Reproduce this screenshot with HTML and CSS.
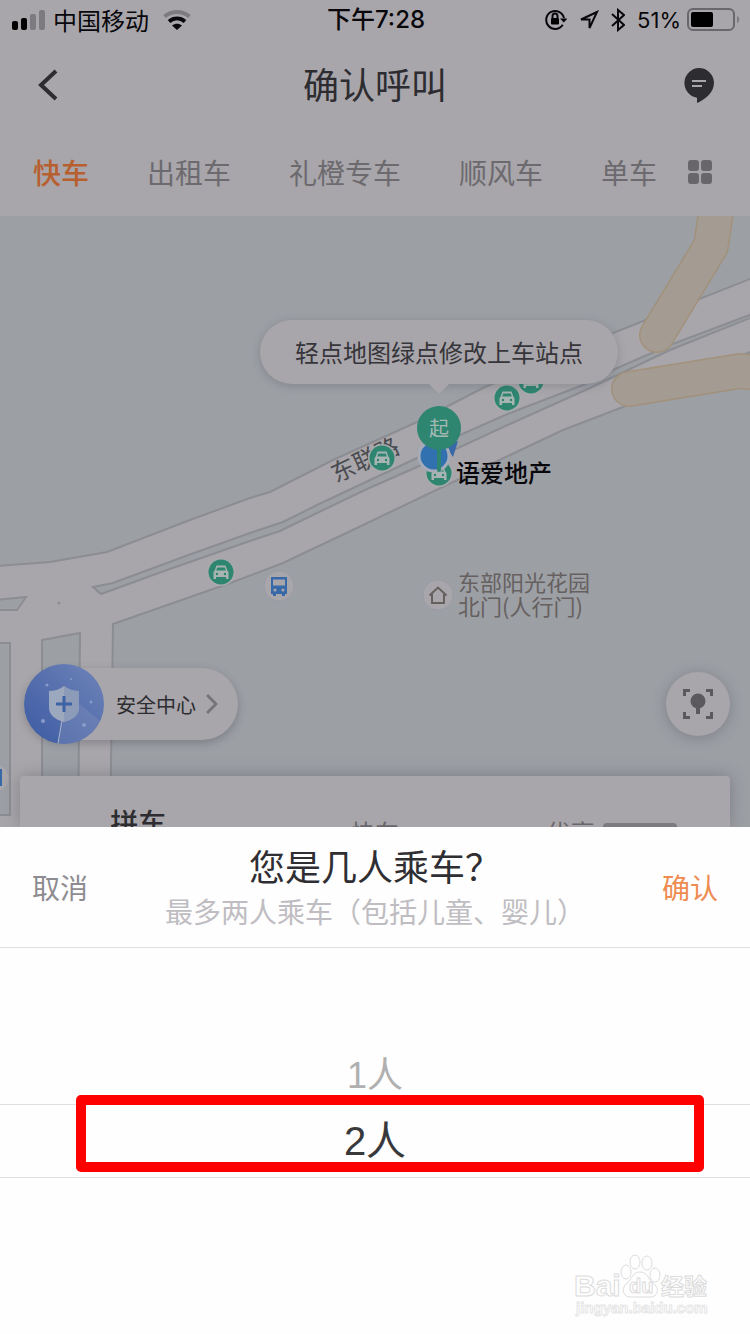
FILE: index.html
```html
<!DOCTYPE html>
<html lang="zh-CN">
<head>
<meta charset="utf-8">
<meta name="viewport" content="width=device-width, initial-scale=1">
<title>确认呼叫</title>
<link rel="stylesheet" href="styles.css">
</head>
<body>
<div class="status">
  <div class="status-side">
    <svg class="signal" width="33" height="20" viewBox="0 0 33 20" aria-hidden="true">
      <rect x="0" y="11" width="6" height="9" rx="2"/><rect x="9" y="8" width="6" height="12" rx="2"/>
      <rect class="dim" x="18" y="4" width="6" height="16" rx="2"/><rect class="dim" x="27" y="0" width="6" height="20" rx="2"/>
    </svg>
    <span>中国移动</span>
    <svg class="wifi" width="28" height="20" viewBox="0 0 28 20" aria-hidden="true">
      <path class="dim-line" d="M1.500 6.500C9 .500 19 .500 26.500 6.500"/>
      <path d="M6 11.500C11 7.500 17 7.500 22 11.500"/>
      <path class="solid" d="M14 20L9 15.500C12 13.300 16 13.300 19 15.500Z"/>
    </svg>
  </div>
  <div class="status-time">下午7:28</div>
  <div class="status-side status-right">
    <svg width="22" height="22" viewBox="0 0 22 22" aria-hidden="true">
      <path class="line" d="M17.800 15.800A9 9 0 1 1 19 9"/><path d="M15 9.500H22.500L18.800 13.500Z"/>
      <rect x="6" y="9" width="8" height="6.500" rx="1"/><path class="line" d="M7.500 9V7A2.500 2.500 0 0 1 12.500 7V9"/>
    </svg>
    <svg width="20" height="20" viewBox="0 0 20 20" aria-hidden="true"><path class="line thin" d="M18 2L2 9.500H10.500V18Z"/></svg>
    <svg width="14" height="24" viewBox="0 0 14 24" aria-hidden="true"><path class="line" d="M1 6L13 17L7 22V2L13 7L1 18"/></svg>
    <span class="percent">51%</span>
    <svg class="battery" width="53" height="24" viewBox="0 0 53 24" aria-hidden="true">
      <rect class="shell" x="1" y="1" width="46" height="21" rx="5"/><rect x="4" y="4" width="22" height="15" rx="2"/>
      <path class="dim" d="M50 8C53 9 53 14 50 15Z"/>
    </svg>
  </div>
</div>
<header class="nav">
  <button class="icon-btn" aria-label="返回"><svg width="24" height="32" viewBox="0 0 24 32"><path class="back" d="M20 2L5 16L20 30"/></svg></button>
  <h1>确认呼叫</h1>
  <button class="icon-btn" aria-label="消息"><svg width="30" height="36" viewBox="0 0 30 36">
    <path class="dark" d="M15 1A15 15 0 0 0 13 30.800V36C20 33 30 26 30 16A15 15 0 0 0 15 1Z"/><path class="chat-lines" d="M8 14H22M8 19H18"/></svg></button>
</header>
<nav class="tabs">
  <a class="active" href="#">快车</a><a href="#">出租车</a><a href="#">礼橙专车</a><a href="#">顺风车</a><a href="#">单车</a>
  <button class="grid-btn" aria-label="全部"><svg width="24" height="24" viewBox="0 0 24 24"><rect width="11" height="11" rx="3"/><rect x="13" width="11" height="11" rx="3"/><rect y="13" width="11" height="11" rx="3"/><rect x="13" y="13" width="11" height="11" rx="3"/></svg></button>
</nav>
<main class="map">
  <svg class="map-canvas" viewBox="0 216 750 611" preserveAspectRatio="xMidYMid slice">
    <defs>
      <g id="car">
        <circle class="pin-ring" r="14"/><circle class="green" r="12.500"/>
        <path class="pale" d="M-4.500 -6.500H4.500L6.500 -1L7.500 0V7H5V5H-5V7H-7.500V0L-6.500 -1Z"/>
        <path class="green" d="M-3.800 -4.500H3.800L4.800 -1.500H-4.800Z"/><circle class="green" cx="-4" cy="2" r="1.200"/><circle class="green" cx="4" cy="2" r="1.200"/>
      </g>
      <g id="bus">
        <circle class="poi" r="15"/>
        <path class="blue" d="M-8 -9H8V8H6V10H3V8H-3V10H-6V8H-8Z"/><rect class="poi-fill" x="-6" y="-6.500" width="12" height="6"/>
        <circle class="poi-fill" cx="-4" cy="4" r="1.600"/><circle class="poi-fill" cx="4" cy="4" r="1.600"/>
      </g>
    </defs>
    <path class="road" d="M-5 566L50 562L107 552L190 520L250 498L270 492L333 460L417 422L483 388L613 333L755 277V350L623 407L563 430L510 455L453 482L340 536L283 563L233 582L113 624L110 835H-5Z"/>
    <path class="land" d="M93 587L113 583L183 557L250 533L283 522L317 505L417 458L460 435L510 413L583 385L615 369L670 345L755 313V316L670 350L590 388L510 424L417 467L367 489L317 513L280 531L250 541L167 570L101 594Z"/>
    <path class="land" d="M-5 600L26 597L17 610H-5ZM42 640L80 633L78 835H42ZM-5 643H10V815H-5Z"/>
    <circle class="dot" cx="59" cy="603" r="1.500"/>
    <path class="walk-edge" d="M717 205L711 246L657 335M629 389L740 371L765 374"/>
    <path class="walk" d="M717 205L711 246L657 335M629 389L740 371L765 374"/>
    <text class="road-name" transform="translate(336 483) rotate(-25)">东联路</text>
    <use href="#car" x="382" y="458"/><use href="#car" x="531" y="381"/><use href="#car" x="507" y="398"/><use href="#car" x="221" y="572"/><use href="#car" x="439" y="473"/>
    <use href="#bus" x="279" y="586"/><use href="#bus" x="-6" y="778"/>
    <path class="blue" d="M445 445L458 441L453 457Z"/><circle class="me" cx="434" cy="456" r="15"/>
    <rect class="green" x="437" y="446" width="4" height="26" rx="2"/><circle class="green" cx="439" cy="428" r="22"/>
    <text class="start" x="439" y="436">起</text>
    <text class="place" x="456" y="482">语爱地产</text>
    <circle class="poi" cx="438" cy="595" r="15"/><path class="house" d="M429.500 595.500L438 587.500L446.500 595.500M432 594V603H444V594"/>
    <text class="poi-name"><tspan x="458" y="591">东部阳光花园</tspan><tspan x="458" y="615">北门(人行门)</tspan></text>
  </svg>
  <div class="bubble">轻点地图绿点修改上车站点</div>
  <button class="safety">
    <svg width="80" height="80" viewBox="0 0 80 80" aria-hidden="true">
      <defs><linearGradient id="ball" x1="0" y1="1" x2="1" y2="0"><stop offset="0" stop-color="#3c5aa3"/><stop offset="1" stop-color="#6f84b8"/></linearGradient></defs>
      <circle cx="40" cy="40" r="40" fill="url(#ball)"/>
      <path class="sweep" d="M38 56L34 79.500A40 40 0 0 0 76 57L56 40Z"/><path class="ray" d="M38 56L34 79.500"/>
      <path class="shield" d="M40 22C45 26 50 27 55 27V44C55 51 48 56 40 58C32 56 25 51 25 44V27C30 27 35 26 40 22Z"/>
      <path class="shield-half" d="M40 22C45 26 50 27 55 27V44C55 51 48 56 40 58Z"/>
      <path class="plus" d="M40 32V48M32 40H48"/>
      <circle class="spark" cx="19" cy="57" r="2"/><circle class="spark" cx="60" cy="61" r="2"/><circle class="spark" cx="23" cy="21" r="1.500"/><circle class="spark" cx="67" cy="38" r="1.500"/><circle class="spark" cx="47" cy="15" r="1"/>
    </svg>
    <span>安全中心</span>
    <svg width="12" height="20" viewBox="0 0 12 20" aria-hidden="true"><path class="chevron" d="M1 1L10 10L1 19"/></svg>
  </button>
  <button class="locate" aria-label="定位"><svg width="30" height="30" viewBox="0 0 30 30">
    <path class="frame" d="M1.500 7V1.500H7M23 1.500H28.500V7M28.500 23V28.500H23M7 28.500H1.500V23"/><circle cx="15" cy="12" r="7.500"/><rect x="13" y="17" width="4" height="8"/></svg></button>
  <section class="card">
    <div class="card-main">拼车</div><div>快车</div><div>优享<span class="badge"></span></div>
  </section>
</main>
<section class="sheet">
  <header class="sheet-head">
    <button class="cancel">取消</button>
    <div class="sheet-title"><h2>您是几人乘车？</h2><p>最多两人乘车（包括儿童、婴儿）</p></div>
    <button class="confirm">确认</button>
  </header>
  <div class="picker">
    <button class="option">1人</button>
    <button class="option selected">2人</button>
    <div class="mark"></div>
  </div>
  <svg class="watermark" width="140" height="72" viewBox="0 0 140 72">
    <text class="wm-logo" x="4" y="44">Bai</text>
    <ellipse cx="56" cy="20" rx="5" ry="7"/><ellipse cx="65" cy="10" rx="5" ry="7"/><ellipse cx="77" cy="11" rx="5" ry="7"/><ellipse cx="85" cy="23" rx="5" ry="7"/>
    <path d="M70 20C62 20 62 28 56 32C51 37 53 46 62 45H78C88 46 90 37 84 32C78 28 78 20 70 20Z"/>
    <text class="wm-du" x="59" y="41">du</text>
    <text class="wm-cn" x="91" y="43">经验</text>
    <text class="wm-url" x="6" y="61">jingyan.baidu.com</text>
  </svg>
</section>
</body>
</html>
```
FILE: styles.css
```css
* { box-sizing: border-box; }
body {
  margin: 0;
  min-height: 100vh;
  display: flex;
  flex-direction: column;
  background: #a8a6aa;
  color: #2d2c31;
  font-family: "Noto Sans CJK SC", sans-serif;
}
button {
  padding: 0;
  border: 0;
  background: none;
  color: inherit;
  font: inherit;
}
svg { display: block; flex: none; }
h1, h2, p { margin: 0; font-weight: 400; }

/* status bar */
.status {
  height: 40px;
  padding: 0 12px;
  display: flex;
  align-items: center;
  color: #08070b;
  font-size: 24px;
  line-height: 40px;
}
.status-side { flex: 1; display: flex; align-items: center; gap: 8px; }
.status-right { justify-content: flex-end; gap: 12px; }
.status-time { font: 500 24px/40px Inter, "Noto Sans CJK SC", sans-serif; }
.wifi { margin-left: 6px; }
.wifi path { fill: none; stroke: #08070b; stroke-width: 4; }
.wifi .dim-line { stroke: #7d7b80; }
.wifi .solid { fill: #08070b; stroke: none; }
.dim { fill: #7d7b80; }
.line { fill: none; stroke: #08070b; stroke-width: 2; }
.percent { font: 22px/40px Inter, sans-serif; }
.battery { margin-left: -6px; }
.status-right { margin-right: -2px; }
.shell { fill: none; stroke: #69676c; stroke-width: 2; }

/* title bar */
.nav {
  height: 88px;
  padding: 2px 36px 0;
  display: flex;
  align-items: center;
  justify-content: space-between;
}
.nav h1 { font-size: 36px; line-height: 44px; padding-bottom: 4px; }
.icon-btn { width: 30px; display: flex; }
.back { fill: none; stroke: #2d2c31; stroke-width: 4; }
.dark { fill: #2d2c31; }
.chat-lines { stroke: #a8a6aa; stroke-width: 2; }

/* service tabs */
.tabs {
  height: 88px;
  padding: 0 38px 0 33px;
  display: flex;
  align-items: center;
  gap: 58px;
  font-size: 28px;
}
.tabs a { color: #6c6a6f; text-decoration: none; white-space: nowrap; }
.tabs .active { color: #b85f30; font-weight: 500; }
.grid-btn { margin-left: -27px; fill: #68666b; }

/* map */
.map {
  position: relative;
  flex: 1;
  min-height: 400px;
  overflow: hidden;
  background: #9c9fa4;
}
.map-canvas { position: absolute; inset: 0; width: 100%; height: 100%; }
.road { fill: #a8a6aa; stroke: #8c8d93; stroke-width: 2; }
.land { fill: #9c9fa4; stroke: #8c8d93; stroke-width: 2; }
.dot { fill: #8c8d93; }
.walk, .walk-edge { fill: none; stroke-linecap: round; stroke-linejoin: round; }
.walk-edge { stroke: #a2917b; stroke-width: 36px; }
.walk { stroke: #a49b92; stroke-width: 33px; }
.pin-ring { fill: #a8aaac; }
.green { fill: #2e8570; }
.pale { fill: #a8b4b2; }
.blue { fill: #3768a8; }
.poi { fill: #a8a6aa; stroke: #9a9ca5; stroke-width: 1; }
.poi-fill { fill: #a8a6aa; }
.me { fill: #3171b0; stroke: #a5abb8; stroke-width: 3; }
.road-name { fill: #4a4b50; font-size: 24px; }
.start { fill: #a5b9b4; font-size: 20px; text-anchor: middle; }
.place { fill: #08070b; font-size: 24px; font-weight: 500; }
.poi-name { fill: #66605f; font-size: 22px; }
.house { fill: none; stroke: #66605f; stroke-width: 2; }
.bubble {
  position: absolute;
  top: 104px;
  left: 439px;
  padding: 0 35px;
  transform: translateX(-50%);
  border-radius: 32px;
  background: #a8a6aa;
  box-shadow: 0 2px 8px rgba(60, 62, 75, .25);
  color: #36353a;
  font-size: 24px;
  line-height: 64px;
  white-space: nowrap;
}
.bubble::after {
  content: "";
  position: absolute;
  top: 64px;
  left: 50%;
  margin-left: -10px;
  border: 10px solid transparent;
  border-top-color: #a8a6aa;
  border-bottom: 0;
}
.safety {
  position: absolute;
  left: 24px;
  bottom: 87px;
  height: 72px;
  padding-right: 20px;
  display: flex;
  align-items: center;
  gap: 12px;
  border-radius: 40px;
  background: #a8a6aa;
  box-shadow: 0 3px 8px rgba(50, 52, 65, .3);
  font-size: 20px;
}
.safety span { margin-right: -2px; }
.sweep { fill: #8391bb; opacity: .35; }
.ray { stroke: #a9b3cc; stroke-width: 1; }
.shield { fill: #9ba8bd; }
.shield-half { fill: #8c9bb8; }
.plus { stroke: #3f61a6; stroke-width: 3; }
.spark { fill: #8a9bc9; }
.chevron { fill: none; stroke: #77757a; stroke-width: 3; }
.locate {
  position: absolute;
  right: 20px;
  bottom: 91px;
  width: 64px;
  height: 64px;
  display: grid;
  place-items: center;
  border-radius: 50%;
  background: #a8a6aa;
  box-shadow: 0 2px 14px rgba(60, 62, 75, .3);
  fill: #5b595e;
}
.frame { fill: none; stroke: #5b595e; stroke-width: 3; }
.card {
  position: absolute;
  left: 20px;
  right: 20px;
  bottom: 0;
  height: 51px;
  padding-top: 44px;
  display: grid;
  grid-template-columns: repeat(3, 1fr);
  border-radius: 4px 4px 0 0;
  background: #a8a6aa;
  box-shadow: 0 0 16px rgba(60, 62, 75, .35);
  color: #68666b;
  font-size: 24px;
  line-height: 24px;
  text-align: center;
}
.card-main { margin-top: -12px; color: #2d2c31; font-size: 28px; line-height: 28px; font-weight: 500; }
.badge {
  display: inline-block;
  width: 74px;
  height: 22px;
  margin-left: 8px;
  border-radius: 4px;
  background: #7d7b80;
  vertical-align: top;
  margin-top: 3px;
}

/* passenger sheet */
.sheet { position: relative; background: #fefefe; }
.sheet-head {
  height: 121px;
  padding: 0 32px;
  display: flex;
  align-items: center;
  justify-content: space-between;
  border-bottom: 1px solid #dfdfe1;
  font-size: 28px;
}
.sheet-title { text-align: center; white-space: nowrap; }
.sheet-title h2 { color: #2f2e33; font-size: 36px; line-height: 48px; }
.sheet-title p { color: #bfbdc2; line-height: 44px; }
.cancel { color: #8e8c91; }
.confirm { color: #ee8c52; }
.picker {
  position: relative;
  padding: 100px 0 156px;
  display: flex;
  flex-direction: column;
  background: #fefefe;
}
.option {
  height: 56px;
  color: #b0b0b0;
  font-family: "Liberation Sans", "Noto Sans CJK SC", sans-serif;
  font-size: 36px;
  line-height: 56px;
}
.option.selected {
  height: 74px;
  border-top: 1px solid #dfdfe1;
  border-bottom: 1px solid #dfdfe1;
  color: #39383a;
  font-size: 40px;
  line-height: 72px;
}
.mark {
  position: absolute;
  top: 147px;
  left: 76px;
  right: 46px;
  height: 77px;
  border: 10px solid #ff0000;
  border-radius: 5px;
  pointer-events: none;
}
.watermark { position: absolute; right: 40px; bottom: 10px; }
.watermark > * { fill: #fefefe; stroke: #dcdcdc; stroke-width: 1; }
.watermark text { font-family: "Liberation Sans", "Noto Sans CJK SC", sans-serif; font-weight: 700; }
.watermark .wm-logo { font-size: 30px; }
.watermark .wm-du { font-size: 20px; }
.watermark .wm-cn { font-size: 23px; }
.watermark .wm-url { font-size: 15px; stroke: #e6e6e6; }
```
